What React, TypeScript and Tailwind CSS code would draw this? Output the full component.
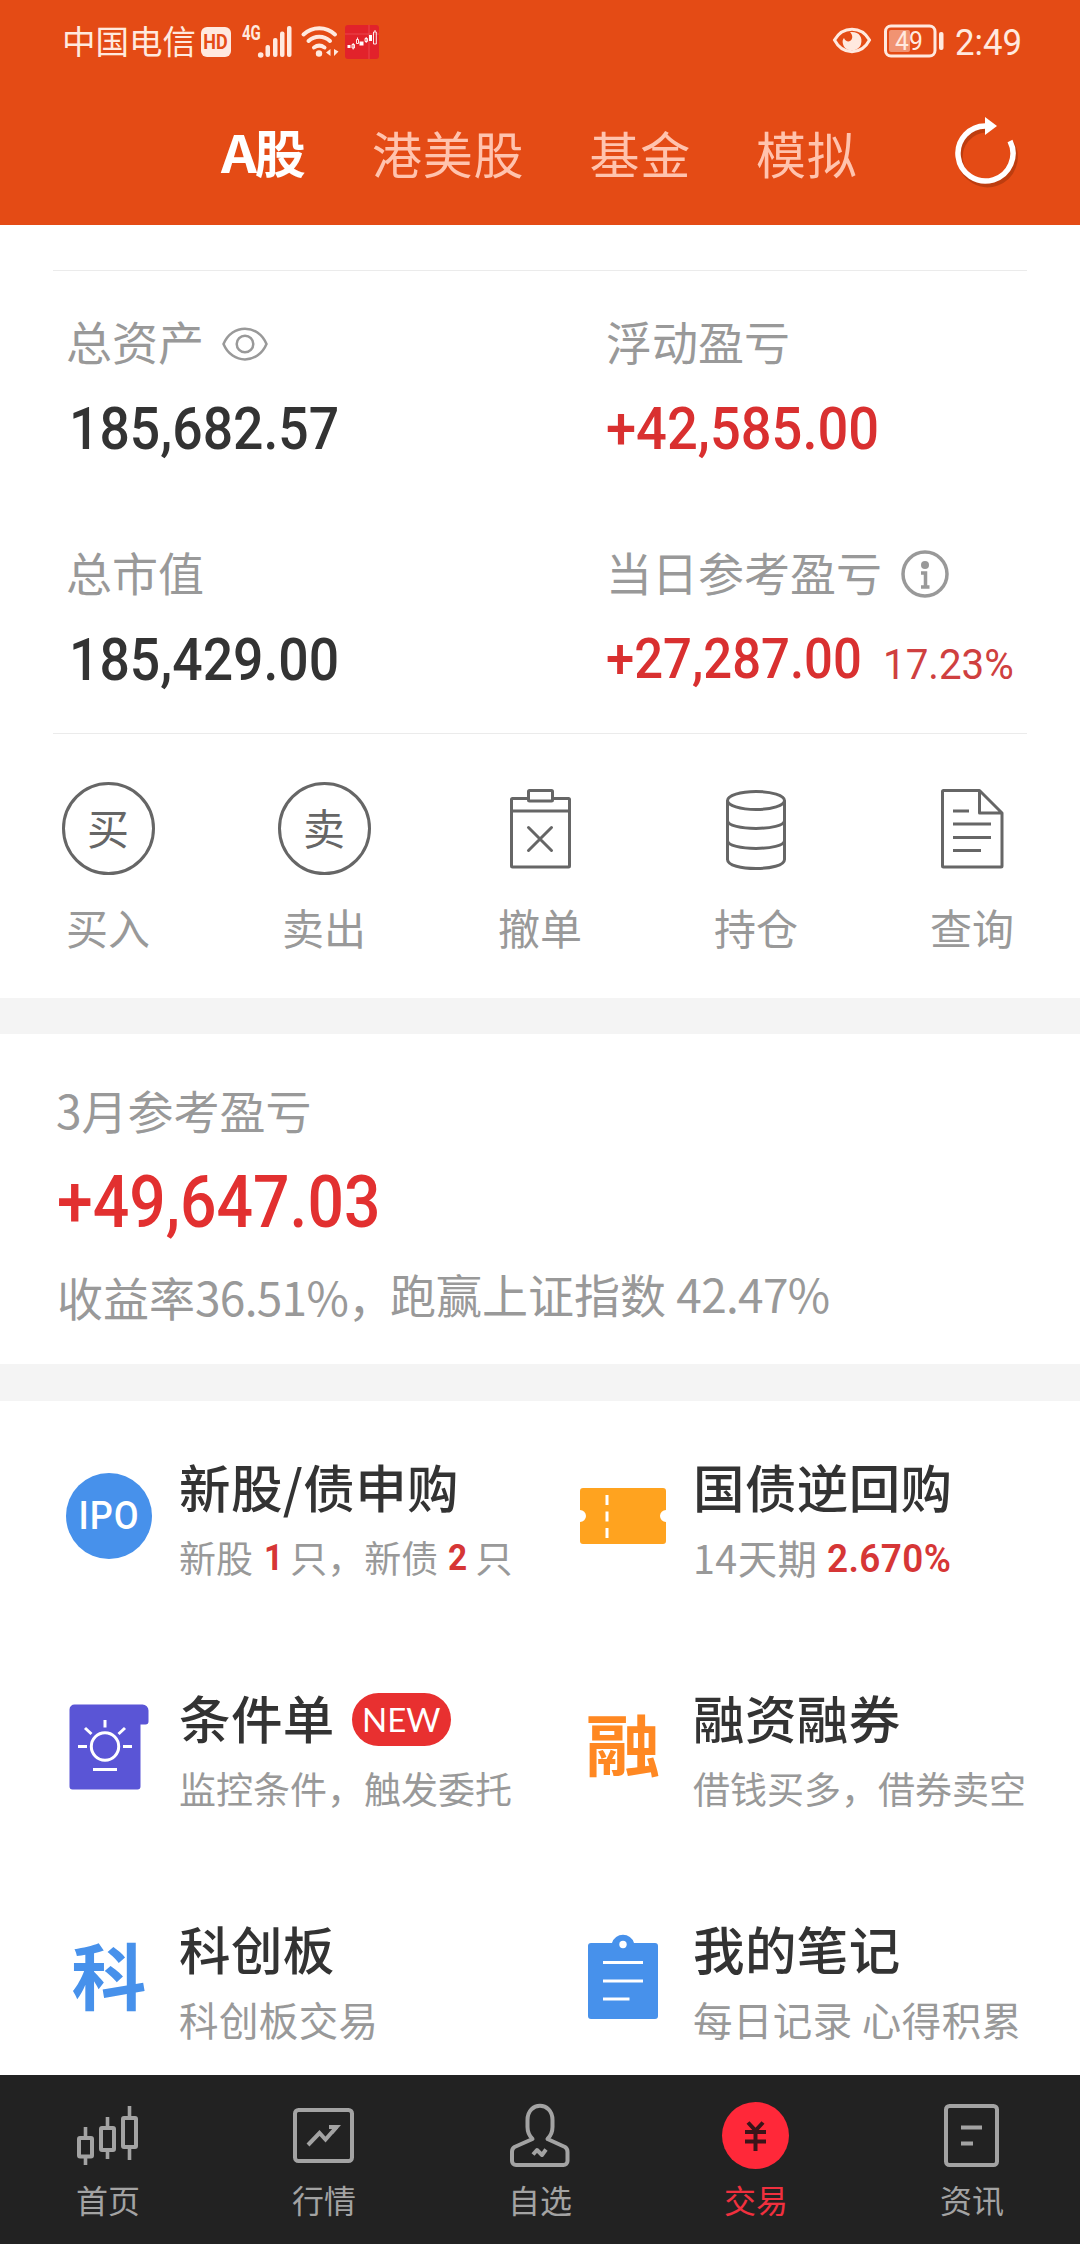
import type { ReactNode } from "react";

const NUM = "font-['Roboto','Noto_Sans_CJK_SC',sans-serif]";

function StatusBar() {
  return (
    <div className="flex h-[84px] items-center pl-[62px] pr-[57px] text-[#ffe9df]">
      <span className="relative -top-0.5 text-[33.500px] leading-none">中国电信</span>
      <span className="ml-[5px] flex h-[30px] w-[30px] items-center justify-center rounded-[6px] bg-[#ffe9df] text-[#e44b15]">
        <span className={`${NUM} scale-x-90 text-[20px] font-bold leading-none`}>HD</span>
      </span>
      <div className="relative ml-[9px] h-9 w-[53px]">
        <span className={`${NUM} absolute left-[2px] top-0 origin-left scale-x-75 text-[20px] font-bold leading-[18px]`}>4G</span>
        <svg className="h-9 w-[53px]" viewBox="240 23 53 36" fill="#ffe9df">
          <circle cx="260.700" cy="54" r="2.800" />
          <rect x="265.500" y="44" width="4.500" height="12" rx="2" />
          <rect x="273" y="37" width="4.500" height="19" rx="2" />
          <rect x="280" y="30.500" width="4.500" height="25.500" rx="2" />
          <rect x="287" y="25" width="4.500" height="31" rx="2" />
        </svg>
      </div>
      <svg className="ml-[7px] h-9 w-10" viewBox="300 23 40 36" fill="none" stroke="#ffe9df" strokeWidth="4" strokeLinecap="round">
        <path d="M303.500 33.500a23 23 0 0 1 31.500 0M308.500 40a16 16 0 0 1 21.500 0M314 46.500a9 9 0 0 1 10.500 0" />
        <circle cx="319" cy="52.500" r="3.200" fill="#ffe9df" stroke="none" />
        <path d="M330.500 48v7l-4.500-3.500zM334 48v7l4.500-4.500z" fill="#ffe9df" stroke="none" />
      </svg>
      <svg className="ml-[5px] h-[34px] w-[34px]" viewBox="0 0 34 34">
        <rect width="34" height="34" rx="3" fill="#e2222b" />
        <path d="M0 9h34M24 0v34" stroke="#ee5055" strokeWidth="0.800" />
        <path d="M2.500 20h3v3h-3zM14.500 16.500h4v4h-4zM24 10h3v6h-3z" fill="#fff" />
        <path d="M7 19.500h2.500v3.500H7zM8.200 18v6.500M11.500 14.500h2v4h-2zM12.500 12.500v2M20 13.500h2.500v3H20zM21.200 12v6M28.500 7h2.800v12h-2.800zM30 5v2" fill="none" stroke="#fff" strokeWidth="0.900" />
      </svg>
      <svg className="relative -top-0.5 ml-auto h-8 w-10" viewBox="832 24 40 32">
        <path d="M834.500 40c8-14.500 27-14.500 35 0c-8 15.500-27 15.500-35 0z" fill="none" stroke="#ffe9df" strokeWidth="3" />
        <path d="M850 32c9-1 13 5 11 12c-2 8-16 9-18 0c-1-3 0-5 1-6c1 3 4 4 6 3c3-2 3-6 0-9z" fill="#ffe9df" />
      </svg>
      <div className={`${NUM} relative -top-px ml-[11px] flex h-9 w-[62px] items-center`}>
        <svg className="absolute inset-0" viewBox="883 23 62 36">
          <rect x="885.500" y="26" width="49.500" height="30" rx="5.500" fill="none" stroke="#ffe9df" strokeWidth="3" />
          <rect x="889" y="30" width="21" height="22" rx="2" fill="#f19372" />
          <rect x="939" y="32" width="4.500" height="18" rx="2" fill="#ffe9df" />
        </svg>
        <span className="relative ml-3 origin-left scale-x-95 text-[26px] leading-none">49</span>
      </div>
      <span className={`${NUM} ml-[10px] w-[68px] origin-left scale-x-[0.940] text-[37px] leading-none`}>2:49</span>
    </div>
  );
}

function TopTabs() {
  return (
    <div className="flex h-[135px] items-center pl-[221px] text-[50px] leading-none text-[#ffc3ae]">
      <span className="flex w-[86px] items-center whitespace-nowrap text-[51px] font-bold text-white">
        <span className="origin-left scale-x-[1.100]">A</span>
        <span className="ml-px">股</span>
      </span>
      <span className="ml-[65px] tracking-[0.800px]">港美股</span>
      <span className="ml-[65px] tracking-[0.800px]">基金</span>
      <span className="ml-[65px] tracking-[0.800px]">模拟</span>
      <svg className="relative top-px ml-[94px] h-[76px] w-[66px]" viewBox="951 115 66 76" fill="none">
        <path d="M985 128A27.500 27.500 0 1 0 1009.500 142" transform="translate(1 1.500)" stroke="#8f2c08" strokeOpacity="0.450" strokeWidth="5.500" />
        <path d="M986 126A27.500 27.500 0 1 0 1009 141" stroke="#fff" strokeWidth="5.500" />
        <path d="M984 117l12 9l-12 9z" fill="#fff" />
      </svg>
    </div>
  );
}

function Stat({ label, icon, children }: { label: string; icon?: ReactNode; children: ReactNode }) {
  return (
    <div>
      <div className="flex h-14 items-center text-[#999]">
        <span className="relative -top-1 text-[46px] leading-none">{label}</span>
        {icon}
      </div>
      <div className="mt-[27px] flex h-[60px] items-center whitespace-nowrap text-[60px] leading-none">{children}</div>
    </div>
  );
}

function Assets() {
  return (
    <section className="mx-[53px] mt-[45px] grid h-[464px] grid-cols-[540px_1fr] grid-rows-[231px_1fr] border-y border-[#ebebeb] pl-[13px] pt-[45px]">
      <Stat
        label="总资产"
        icon={
          <svg className="ml-[17px] h-9 w-12" viewBox="0 0 48 36" fill="none" stroke="#999" strokeWidth="2.500">
            <path d="M2.500 18C11-2.500 37-2.500 45.500 18C37 38.500 11 38.500 2.500 18z" />
            <circle cx="24" cy="18" r="8.300" />
          </svg>
        }
      >
        <span className={`${NUM} ml-[3px] origin-left scale-x-[0.892] font-medium text-[#333]`}>185,682.57</span>
      </Stat>
      <Stat label="浮动盈亏">
        <span className={`${NUM} origin-left scale-x-[0.904] font-medium text-[#d93030]`}>+42,585.00</span>
      </Stat>
      <Stat label="总市值">
        <span className={`${NUM} ml-[3px] origin-left scale-x-[0.892] font-medium text-[#333]`}>185,429.00</span>
      </Stat>
      <Stat
        label="当日参考盈亏"
        icon={
          <svg className="ml-[18px] h-[50px] w-[50px]" viewBox="0 0 50 50" fill="none" stroke="#999">
            <circle cx="25" cy="24" r="22" strokeWidth="3.500" />
            <circle cx="25" cy="15" r="4" fill="#999" stroke="none" />
            <path d="M21 23h4.500v14M21 37h8.500" strokeWidth="3.500" />
          </svg>
        }
      >
        <span className={`${NUM} relative -top-px w-[277px] origin-left scale-x-[0.907] text-[56px] font-medium text-[#d93030]`}>+27,287.00</span>
        <span className={`${NUM} relative top-[5px] origin-left scale-x-[0.960] text-[42px] text-[#cf4040]`}>17.23%</span>
      </Stat>
    </section>
  );
}

function Ring({ children }: { children: string }) {
  return (
    <span className="flex h-[93px] w-[93px] items-center justify-center rounded-full border-[3px] border-[#666] text-[42px] leading-none text-[#666]">
      <span className="relative -top-0.5">{children}</span>
    </span>
  );
}

const line = { fill: "none", stroke: "#666", strokeWidth: 3 };

const actions: { label: string; icon: ReactNode }[] = [
  { label: "买入", icon: <Ring>买</Ring> },
  { label: "卖出", icon: <Ring>卖</Ring> },
  {
    label: "撤单",
    icon: (
      <svg className="h-[93px] w-[93px]" viewBox="494 781 93 93" {...line}>
        <path d="M528 797.500h-15.500a1 1 0 0 0-1 1V865a1 1 0 0 0 1 1h56a1 1 0 0 0 1-1V798.500a1 1 0 0 0-1-1H553M512 810h57" />
        <rect x="528.500" y="789.500" width="24" height="10.500" rx="1" />
        <path d="M528.500 826.500l23 23M551.500 826.500l-23 23" strokeLinecap="round" />
      </svg>
    ),
  },
  {
    label: "持仓",
    icon: (
      <svg className="h-[93px] w-[93px]" viewBox="710 781 93 93" {...line}>
        <ellipse cx="756" cy="799.500" rx="28.500" ry="9" />
        <path d="M727.500 799.500v59c0 12 57 12 57 0v-59M727.500 819.500c0 10.500 57 10.500 57 0M727.500 839.500c0 10.500 57 10.500 57 0" />
      </svg>
    ),
  },
  {
    label: "查询",
    icon: (
      <svg className="h-[93px] w-[93px]" viewBox="926 781 93 93" {...line}>
        <path d="M979.500 789.500H943.500a1 1 0 0 0-1 1V865a1 1 0 0 0 1 1h57.500a1 1 0 0 0 1-1V812zV812h22M953 810h16M953 823h38M953 836.500h38M953 849.500h28" strokeLinejoin="round" />
      </svg>
    ),
  },
];

function Actions() {
  return (
    <section className="grid h-[264px] grid-cols-5 pt-[48px]">
      {actions.map((a) => (
        <div key={a.label} className="flex flex-col items-center">
          {a.icon}
          <span className="mt-[31px] text-[42px] leading-none text-[#999]">{a.label}</span>
        </div>
      ))}
    </section>
  );
}

function Month() {
  return (
    <section className="flex h-[330px] flex-col pl-[57px] pt-[52px] text-[46px] leading-none text-[#999]">
      <p className="ml-[-1px]">3月参考盈亏</p>
      <p className={`${NUM} mt-[34px] w-fit origin-left scale-x-[0.880] text-[73px] font-medium text-[#e23030]`}>+49,647.03</p>
      <p className="mt-[31px] flex whitespace-nowrap">
        <span className="w-[333px] pt-[3px]">
          收益率<span className="tracking-[-0.700px]">36.51%</span>，
        </span>
        <span>
          跑赢上证指数 <span className="tracking-[-0.700px]">42.47%</span>
        </span>
      </p>
    </section>
  );
}

const features: { title: string; badge?: string; note: ReactNode; icon: ReactNode; wide?: boolean }[] = [
  {
    title: "新股/债申购",
    icon: (
      <span className="flex h-[86px] w-[86px] items-center justify-center rounded-full bg-[#4791eb] text-white">
        <span className={`${NUM} scale-x-95 text-[38px] font-medium leading-none tracking-[1px]`}>IPO</span>
      </span>
    ),
    note: (
      <>
        新股<b className={`${NUM} ml-[10px] mr-[6px] scale-x-90 text-[#d63636]`}>1</b>只，新债<b className={`${NUM} ml-[9px] mr-[7px] scale-x-90 text-[#d63636]`}>2</b>只
      </>
    ),
  },
  {
    title: "国债逆回购",
    wide: true,
    icon: (
      <svg className="h-[56px] w-[86px]" viewBox="0 0 86 56">
        <path d="M3 0h80a3 3 0 0 1 3 3v19a6 6 0 0 0 0 12v19a3 3 0 0 1-3 3H3a3 3 0 0 1-3-3V34a6 6 0 0 0 0-12V3a3 3 0 0 1 3-3z" fill="#ffa31f" />
        <path d="M27 7v10M27 23.500v10M27 40v10" stroke="#fff" strokeWidth="3" />
      </svg>
    ),
    note: (
      <>
        14天期
        <b className={`${NUM} relative top-0.5 ml-[10px] origin-left scale-x-[0.970] text-[38px] font-semibold text-[#d63636]`}>2.670%</b>
      </>
    ),
  },
  {
    title: "条件单",
    badge: "NEW",
    icon: (
      <svg className="h-[86px] w-[80px]" viewBox="68.500 1703.500 80 86">
        <path d="M74 1704h68a6 6 0 0 1 6 6v11a3 3 0 0 1-3 3h-5v62a3 3 0 0 1-3 3H72a3 3 0 0 1-3-3v-77a5 5 0 0 1 5-5z" fill="#5a55d6" />
        <g fill="none" stroke="#fff" strokeWidth="3">
          <circle cx="104.500" cy="1746" r="13.700" />
          <path d="M77.500 1746h9M122.500 1746h9M104.500 1719.500v7.500M84.500 1727.500l6.500 6M124.500 1727.500l-6.500 6M92.500 1769h24" />
        </g>
      </svg>
    ),
    note: "监控条件，触发委托",
  },
  {
    title: "融资融券",
    icon: <span className="-mt-3 scale-y-90 text-[75px] font-bold leading-none text-[#ff8822]">融</span>,
    note: "借钱买多，借券卖空",
  },
  {
    title: "科创板",
    wide: true,
    icon: <span className="-mt-2.5 scale-y-95 text-[75px] font-bold leading-none text-[#4791eb]">科</span>,
    note: "科创板交易",
  },
  {
    title: "我的笔记",
    wide: true,
    icon: (
      <svg className="-mt-1 h-[88px] w-[72px]" viewBox="587 1934 72 88">
        <path d="M591 1945h21a11.500 11.500 0 0 1 22 0h21a3 3 0 0 1 3 3v70a3 3 0 0 1-3 3H591a3 3 0 0 1-3-3v-70a3 3 0 0 1 3-3z" fill="#4791eb" />
        <circle cx="623" cy="1946.500" r="3.700" fill="#fff" />
        <path d="M603 1964.500h40M603 1983h40M603 2001h26.500" stroke="#fff" strokeWidth="3" />
      </svg>
    ),
    note: "每日记录 心得积累",
  },
];

function Features() {
  return (
    <section className="grid h-[674px] grid-cols-[514px_1fr] grid-rows-[231px_231px_1fr] overflow-hidden pl-[54px] pt-[60px]">
      {features.map((f) => (
        <div key={f.title} className="flex">
          <div className="flex h-[110px] w-[110px] shrink-0 items-center justify-center">{f.icon}</div>
          <div className="ml-[15px] whitespace-nowrap">
            <div className="flex h-[56px] items-center text-[#333]">
              <span className="relative -top-[3px] text-[51.500px] font-medium leading-none tracking-[0.400px]">{f.title}</span>
              {f.badge && (
                <span className="-mt-0.5 ml-[17px] flex h-[53px] w-[99px] items-center justify-center rounded-full bg-[#e83030] font-['Lato'] text-[33px] leading-none text-white">
                  {f.badge}
                </span>
              )}
            </div>
            <div className={`mt-[17px] flex h-[46px] items-center leading-none text-[#999] ${f.wide ? "text-[39.500px] tracking-[0.400px]" : "text-[37px]"}`}>
              {f.note}
            </div>
          </div>
        </div>
      ))}
    </section>
  );
}

const nav: { label: string; active?: boolean; icon: ReactNode }[] = [
  {
    label: "首页",
    icon: (
      <svg className="h-[70px] w-[70px]" viewBox="73 2100 70 70" fill="none" stroke="#a3a3a3" strokeWidth="4">
        <rect x="79" y="2138" width="13" height="18.500" rx="1" />
        <rect x="101" y="2128" width="13" height="22" rx="1" />
        <rect x="123" y="2118" width="13" height="29" rx="1" />
        <path d="M85.500 2127v10M85.500 2158v7M107.500 2117v10M107.500 2152v7M129.500 2106v10M129.500 2149v11" strokeWidth="3.600" />
      </svg>
    ),
  },
  {
    label: "行情",
    icon: (
      <svg className="h-[70px] w-[70px]" viewBox="289 2100 70 70" fill="none" stroke="#a3a3a3" strokeWidth="4">
        <rect x="295" y="2110" width="57" height="51" rx="3.500" />
        <path d="M308 2145l11.500-12l6 6.500l11-12.500" />
        <path d="M329 2125h12l-8 9l-1-5h-3z" fill="#a3a3a3" stroke="none" />
      </svg>
    ),
  },
  {
    label: "自选",
    icon: (
      <svg className="h-[70px] w-[70px]" viewBox="505 2100 70 70" fill="none" stroke="#a3a3a3" strokeWidth="4" strokeLinejoin="round">
        <path d="M532.500 2139c-4-4-5-7-5-12v-7c0-19 25-19 25 0v7c0 5-1 8-5 12l17.500 8q2.500 1.500 2.500 5V2161a4 4 0 0 1-4 4H516a4 4 0 0 1-4-4v-9q0-3.500 2.500-5z" />
        <path d="M533 2154.500l4-4.500l5 5l4-5.500" />
      </svg>
    ),
  },
  {
    label: "交易",
    active: true,
    icon: (
      <svg className="h-[70px] w-[70px]" viewBox="721 2100 70 70" fill="none" stroke="#3a1419" strokeWidth="4">
        <circle cx="755.500" cy="2135.500" r="33.500" fill="#ff2839" stroke="none" />
        <path d="M748 2122.500l7.500 8l7.500-8M755.500 2130v21M745 2132h21M745 2141.500h21" />
      </svg>
    ),
  },
  {
    label: "资讯",
    icon: (
      <svg className="h-[70px] w-[70px]" viewBox="937 2100 70 70" fill="none" stroke="#a3a3a3" strokeWidth="4">
        <rect x="946" y="2106" width="51" height="59" rx="3.500" />
        <path d="M961 2127.500h21M961 2143.500h12" />
      </svg>
    ),
  },
];

function BottomNav() {
  return (
    <nav className="grid h-[169px] grid-cols-5 bg-[#222] pt-[25px]">
      {nav.map((n) => (
        <div key={n.label} className={`flex flex-col items-center ${n.active ? "text-[#f0303e]" : "text-[#a3a3a3]"}`}>
          {n.icon}
          <span className="mt-[13px] text-[32px] leading-none">{n.label}</span>
        </div>
      ))}
    </nav>
  );
}

export default function App() {
  return (
    <div className="flex h-[2244px] w-[1080px] flex-col overflow-hidden bg-white font-['Noto_Sans_CJK_SC',sans-serif]">
      <header className="h-[225px] bg-[#e44b15]">
        <StatusBar />
        <TopTabs />
      </header>
      <Assets />
      <Actions />
      <div className="h-[36px] shrink-0 bg-[#f4f4f4]" />
      <Month />
      <div className="h-[37px] shrink-0 bg-[#f4f4f4]" />
      <Features />
      <BottomNav />
    </div>
  );
}
